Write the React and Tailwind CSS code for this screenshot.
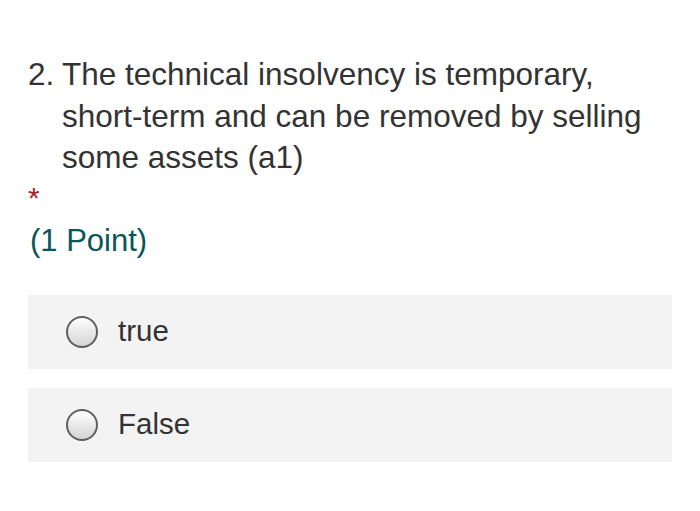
export default function App() {
	const options = ['true', 'False']

	return (
		<div className="w-[700px] h-[511px] bg-white font-['Liberation_Sans',Arial,sans-serif] text-[#333333] overflow-hidden">
			<div className="pl-[28px] pr-[28px] pt-[54px]">
				<div className="flex text-[31.5px] leading-[41.5px] pr-[10px]">
					<span className="w-[34px] shrink-0">2.</span>
					<span>The technical insolvency is temporary, short-term and can be removed by selling some assets (a1)</span>
				</div>
				<div className="mt-[8px] text-[30px] leading-[22px] text-[#a4262c]">*</div>
				<div className="mt-[16px] text-[31px] leading-[32px] text-[#0b5656] pl-[2px]">(1 Point)</div>
				<div className="mt-[38px] flex flex-col gap-[19px]">
					{options.map(o => (
						<label key={o} className="h-[74px] bg-[#f3f3f3] flex items-center pl-[38px]">
							<span className="w-[32px] h-[32px] rounded-full border-2 border-[#5f5f5f] bg-gradient-to-b from-white to-[#d4d4d4] shrink-0"></span>
							<span className="ml-[20px] text-[29.5px]">{o}</span>
						</label>
					))}
				</div>
			</div>
		</div>
	)
}
